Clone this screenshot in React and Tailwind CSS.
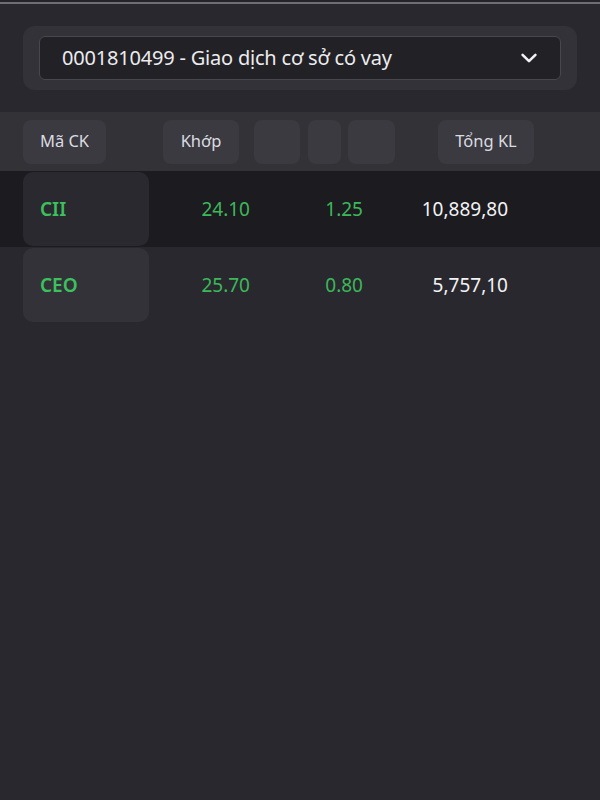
import React from "react";

const rows = [
  { sym: "CII", khop: "24.10", ch: "1.25", kl: "10,889,80", dark: true },
  { sym: "CEO", khop: "25.70", ch: "0.80", kl: "5,757,10", dark: false },
];

export default function App() {
  return (
    <div
      className="w-[600px] h-[800px] bg-[#29282e] flex flex-col overflow-hidden"
      style={{ fontFamily: '"Noto Sans", "Open Sans", sans-serif' }}
    >
      <div className="h-[2px] bg-[#242328]" />
      <div className="h-[2px] bg-[#6f6e74]" />
      <div className="pt-[22px] px-[23px]">
        <div className="rounded-[12px] bg-[#323238] px-[16px] py-[10px]">
          <div className="h-[44px] rounded-[6px] bg-[#222126] border border-[#48474d] flex items-center justify-between pl-[22px] pr-[20px]">
            <span className="text-[20px] text-[#ececee] tracking-[-0.2px]">
              0001810499 - Giao dịch cơ sở có vay
            </span>
            <svg width="22" height="22" viewBox="0 0 24 24" fill="none">
              <path
                d="M5 8.5l7 7 7-7"
                stroke="#f2f2f2"
                strokeWidth="2.8"
                strokeLinecap="round"
                strokeLinejoin="round"
              />
            </svg>
          </div>
        </div>
      </div>
      <div className="mt-[22px] h-[59px] bg-[#323237] flex items-center px-[23px] text-[16.5px] text-[#dcdce0]">
        <div className="w-[83px] h-[44px] rounded-[8px] bg-[#3a3a40] flex items-center justify-center">Mã CK</div>
        <div className="ml-[57px] w-[76px] h-[44px] rounded-[8px] bg-[#3a3a40] flex items-center justify-center">Khớp</div>
        <div className="ml-[15px] w-[46px] h-[44px] rounded-[8px] bg-[#3a3a40]" />
        <div className="ml-[8px] w-[33px] h-[44px] rounded-[8px] bg-[#3a3a40]" />
        <div className="ml-[7px] w-[47px] h-[44px] rounded-[8px] bg-[#3a3a40]" />
        <div className="ml-[43px] w-[96px] h-[44px] rounded-[8px] bg-[#3a3a40] flex items-center justify-center">Tổng KL</div>
      </div>
      {rows.map((r) => (
        <div
          key={r.sym}
          className={`h-[76px] flex items-center px-[23px] text-[19px] ${r.dark ? "bg-[#1c1b20]" : "bg-[#29282e]"}`}
        >
          <div
            className={`w-[126px] h-[74px] rounded-[10px] flex items-center pl-[17px] font-semibold text-[#3cc15e] ${r.dark ? "bg-[#2a292f]" : "bg-[#333238]"}`}
          >
            {r.sym}
          </div>
          <div className="w-[101px] text-right text-[#3cb85a]">{r.khop}</div>
          <div className="w-[113px] text-right text-[#3cb85a]">{r.ch}</div>
          <div className="w-[145px] text-right text-[#f2f2f4]">{r.kl}</div>
        </div>
      ))}
    </div>
  );
}
